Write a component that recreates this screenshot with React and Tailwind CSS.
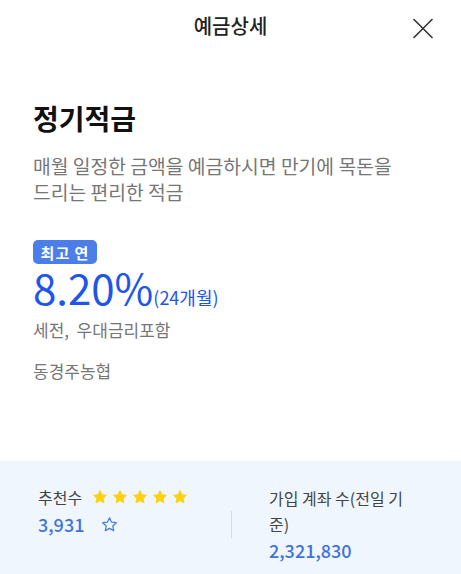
import React from "react";

const Star = ({ filled, size = 16 }) => (
  <svg width={size} height={size} viewBox="0 0 24 24">
    <path
      d="M12 2.5l2.9 6.2 6.7.8-5 4.6 1.3 6.6L12 17.4l-5.9 3.3 1.3-6.6-5-4.6 6.7-.8z"
      fill={filled ? "#fdd10f" : "none"}
      stroke={filled ? "#fdd10f" : "#4a7fe0"}
      strokeWidth={filled ? 1.5 : 1.8}
      strokeLinejoin="round"
    />
  </svg>
);

export default function App() {
  return (
    <div
      className="w-[461px] h-[574px] bg-white flex flex-col overflow-hidden"
      style={{ fontFamily: '"Noto Sans CJK KR", "Noto Sans", sans-serif' }}
    >
      {/* header */}
      <div className="relative h-[52px] flex items-center justify-center">
        <span className="text-[20px] font-medium text-[#222]">예금상세</span>
        <svg className="absolute left-[413px] top-[18px]" width="20" height="21" viewBox="0 0 20 21">
          <path d="M1 1.5l18 18M19 1.5l-18 18" stroke="#333" strokeWidth="1.6" strokeLinecap="round" />
        </svg>
      </div>

      <div className="flex-1 px-[33px] pt-[46px]">
        <h1 className="text-[28px] font-semibold text-[#111] leading-[40px]">정기적금</h1>
        <p className="mt-[15px] text-[19.3px] leading-[26px] text-[#767676]">
          매월 일정한 금액을 예금하시면 만기에 목돈을
          <br />
          드리는 편리한 적금
        </p>
        <div className="mt-[35px] inline-flex items-center justify-center h-[24px] w-[64px] rounded-[5px] bg-[#4b7ee8] text-white text-[15px] font-semibold leading-none tracking-[1px] whitespace-pre">
          최고 연
        </div>
        <div className="flex items-baseline text-[#1f56ea] leading-[38px] mt-[4px]">
          <span className="text-[42px] font-normal">8.20%</span>
          <span className="text-[18px]">(24개월)</span>
        </div>
        <p className="mt-[1px] text-[17px] text-[#767676] whitespace-pre">세전,  우대금리포함</p>
        <p className="mt-[15px] text-[17px] text-[#767676]">동경주농협</p>
      </div>

      {/* stats */}
      <div className="h-[113px] bg-[#f0f6fd] flex items-start pt-[24px]">
        <div className="w-[231px] pl-[38px]">
          <div className="flex items-center gap-[10px]">
            <span className="text-[16px] text-[#444]">추천수</span>
            <div className="flex gap-[4px]">
              <Star filled />
              <Star filled />
              <Star filled />
              <Star filled />
              <Star filled />
            </div>
          </div>
          <div className="flex items-center gap-[17px] mt-[2px]">
            <span className="text-[18px] text-[#3f72dd] font-medium">3,931</span>
            <Star size={17} />
          </div>
        </div>
        <div className="w-px h-[27px] bg-[#d8dde4] mt-[26px]" />
        <div className="pl-[37px] w-[190px]">
          <p className="text-[16px] leading-[26px] text-[#444]">가입 계좌 수(전일 기준)</p>
          <p className="text-[18px] text-[#3f72dd] font-medium">2,321,830</p>
        </div>
      </div>
    </div>
  );
}
